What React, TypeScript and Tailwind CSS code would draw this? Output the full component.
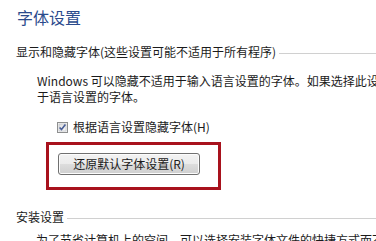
import React from "react";

const cjk = { fontFamily: '"Noto Sans CJK SC", "Noto Sans", sans-serif' };

function GroupHeading({ label }: { label: string }) {
  return (
    <div className="flex items-center gap-[3px] pl-[16px] text-[12px] leading-[16px] text-[#1b1b1b]">
      <span className="whitespace-nowrap">{label}</span>
      <div className="mt-[2px] h-px flex-1 bg-[#d0d0d0]" />
    </div>
  );
}

function Win7Checkbox() {
  return (
    <svg width="11" height="11" viewBox="0 0 11 11" className="shrink-0">
      <defs>
        <linearGradient id="cbFill" x1="0" y1="0" x2="1" y2="1">
          <stop offset="0" stopColor="#dcdcdc" />
          <stop offset="1" stopColor="#fbfbfb" />
        </linearGradient>
      </defs>
      <rect x="0.5" y="0.5" width="10" height="10" fill="#f4f4f4" stroke="#8e8f8f" />
      <rect x="2" y="2" width="7" height="7" fill="url(#cbFill)" stroke="#b8bcc4" strokeWidth="0.6" />
      <path d="M2.6 5.4 L4.5 7.6 L8.4 2.6" fill="none" stroke="#4a5f97" strokeWidth="1.6" />
    </svg>
  );
}

export default function App() {
  return (
    <div className="h-[241px] w-[376px] overflow-hidden bg-white" style={cjk}>
      {/* Page title */}
      <h1 className="pl-[17px] pt-[7px] text-[16px] leading-[20px] font-normal text-[#2a4a8c]">
        字体设置
      </h1>

      {/* Show / hide fonts group */}
      <div className="mt-[17px]">
        <GroupHeading label="显示和隐藏字体(这些设置可能不适用于所有程序)" />
      </div>

      <div className="mt-[13px] pl-[37px] text-[12px] leading-[15.5px] text-[#1b1b1b]">
        <p className="whitespace-nowrap">
          Windows 可以隐藏不适用于输入语言设置的字体。如果选择此设置，则只显示适用
        </p>
        <p className="whitespace-nowrap">于语言设置的字体。</p>
      </div>

      <label className="mt-[15px] flex items-center gap-[5px] pl-[57px] text-[12px] leading-[16px] text-[#1b1b1b]">
        <Win7Checkbox />
        <span className="whitespace-nowrap">根据语言设置隐藏字体(H)</span>
      </label>

      {/* Highlighted restore button */}
      <div className="ml-[46px] mt-[7px] h-[48px] w-[175px] border-[3px] border-[#a8121d] pl-[9px] pt-[8px]">
        <button className="flex h-[22px] w-[142px] items-center justify-center rounded-[3px] border border-[#707070] bg-[linear-gradient(#f3f3f3_0%,#ebebeb_50%,#dddddd_50%,#cfcfcf_100%)] text-[12px] leading-[16px] text-[#1b1b1b] shadow-[inset_0_0_0_1px_#fcfcfc]">
          还原默认字体设置(R)
        </button>
      </div>

      {/* Install settings group */}
      <div className="mt-[19px]">
        <GroupHeading label="安装设置" />
      </div>

      <p className="mt-[7px] whitespace-nowrap pl-[36px] text-[12px] leading-[16px] text-[#1b1b1b]">
        为了节省计算机上的空间，可以选择安装字体文件的快捷方式而不是字体文件本身。
      </p>
    </div>
  );
}
